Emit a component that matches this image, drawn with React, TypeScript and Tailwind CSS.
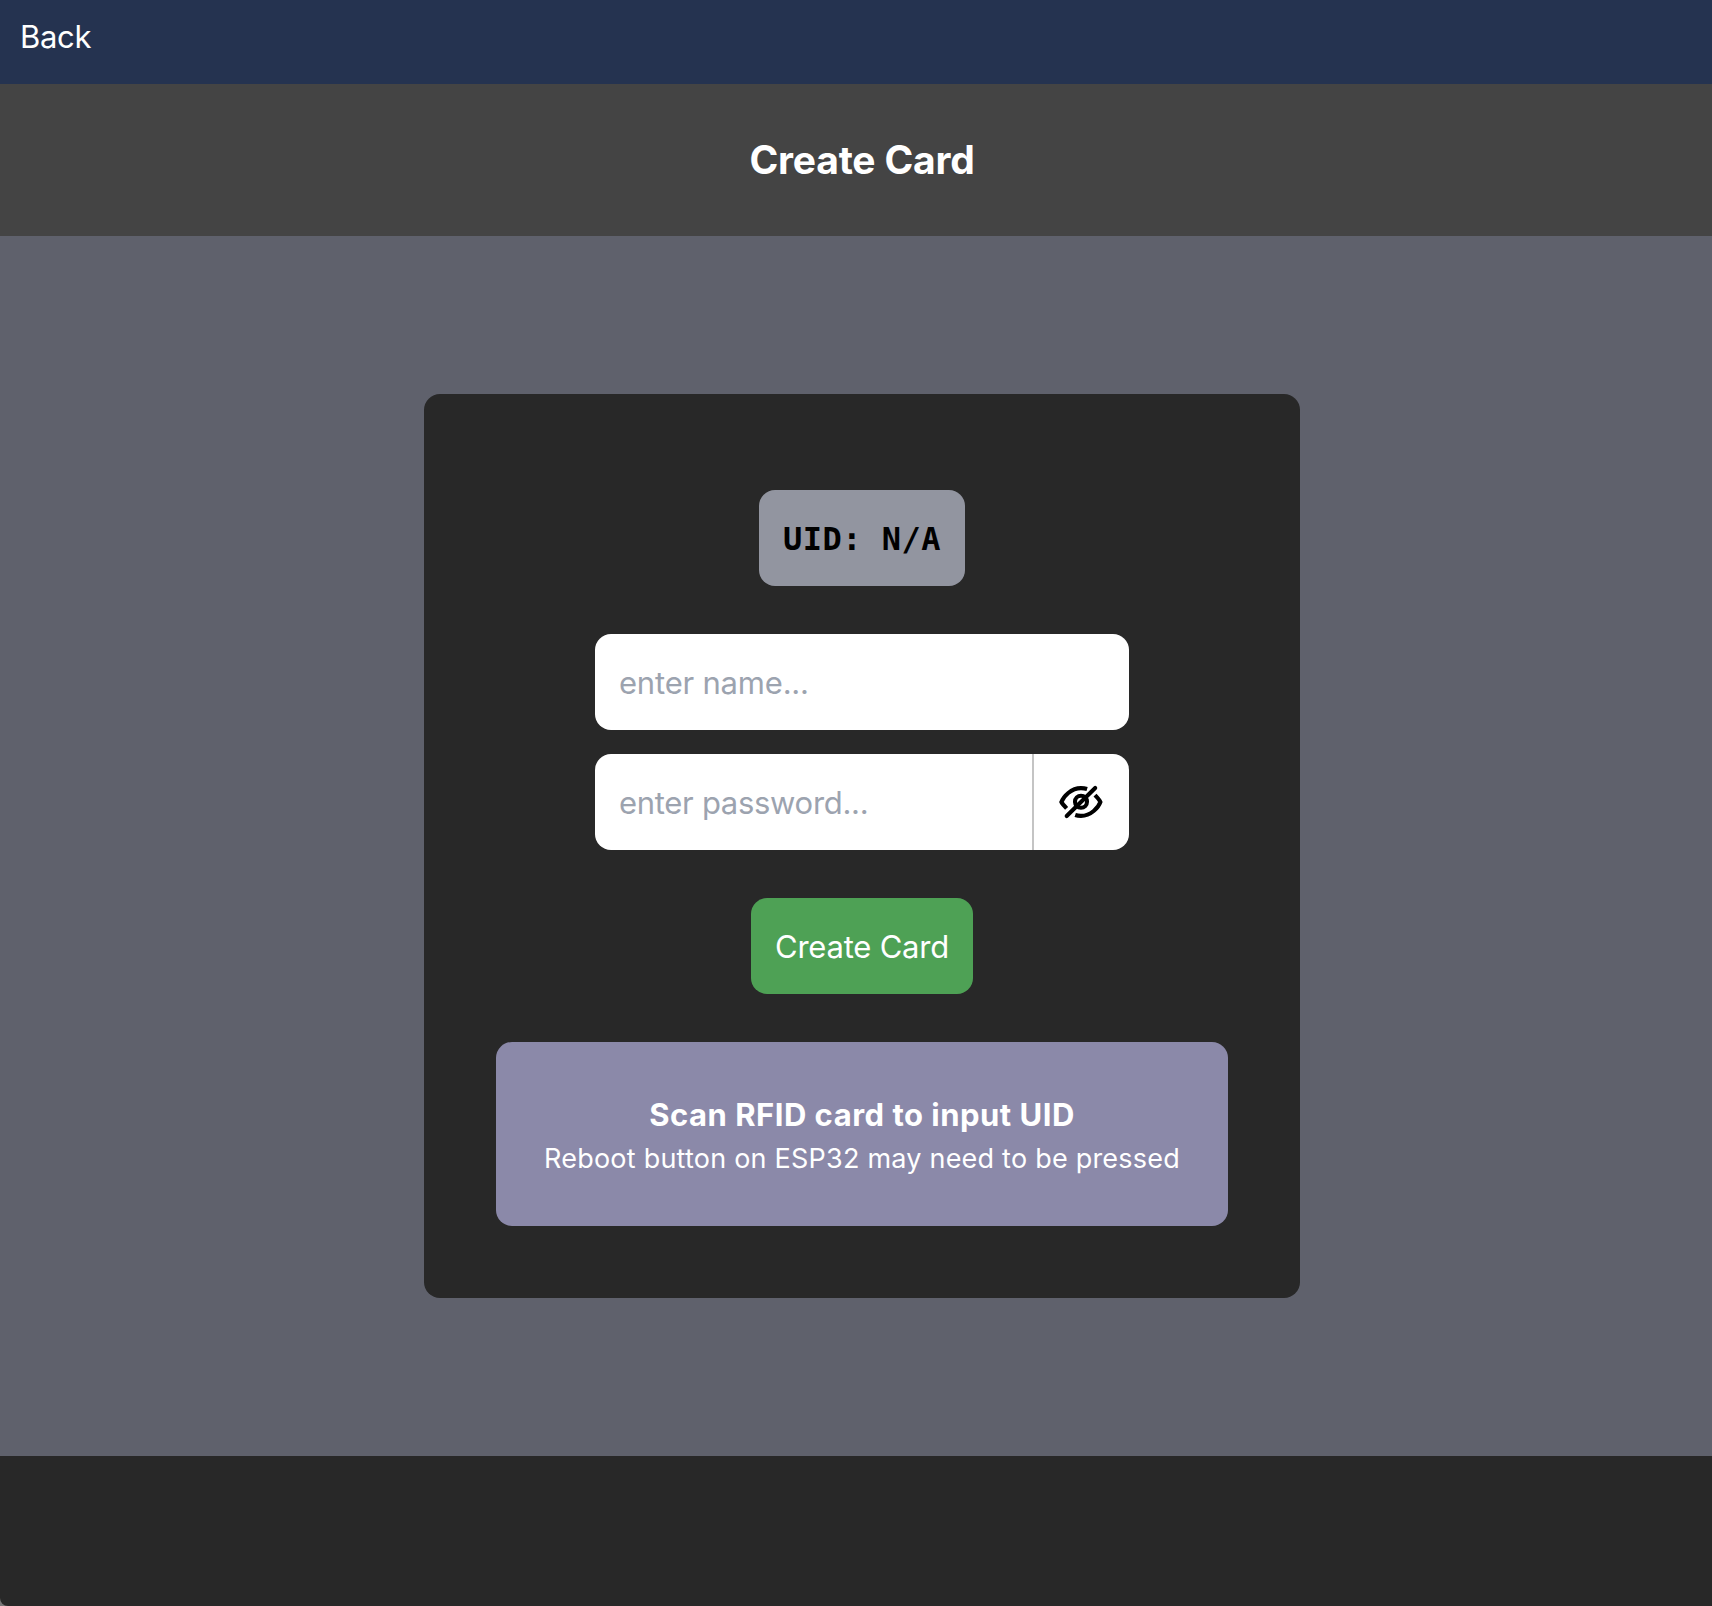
import { useState } from "react";

function EyeOff() {
  return (
    <svg className="mr-px size-12" viewBox="0 0 48 48" fill="none" stroke="currentColor" strokeWidth="4.1" aria-hidden="true">
      <circle cx="24" cy="23.8" r="6" />
      <path strokeLinecap="round" d="M9.7 38 38.2 10" />
      <path d="M9.6 30.4C7.4 28 5 25.2 4.4 24 6.5 18.5 14 10.1 24 10.1c2.2 0 4.2.3 6.1.9" />
      <path d="M38 17.2C40.3 19.6 42.8 22.6 43.4 24 41.4 29.5 34 37.9 24 37.9c-2.1 0-4.1-.3-5.8-.9" />
    </svg>
  );
}

export default function App() {
  const [name, setName] = useState("");
  const [password, setPassword] = useState("");
  const [visible, setVisible] = useState(false);

  return (
    <div className="bg-[#777777]">
      <div className="flex h-[1606px] flex-col overflow-hidden rounded-bl-[8px] bg-[#282828] font-[Inter,sans-serif] text-[31px] leading-[48px] text-white">
        <nav className="h-[84px] shrink-0 bg-[#253350] px-5 pt-[13px]">
          <a href="#" className="inline-block tracking-[-0.3px]">Back</a>
        </nav>

        <header className="flex h-[152px] shrink-0 items-center justify-center bg-[#444444] pl-3">
          <h1 className="text-[39px] leading-[56px] font-bold tracking-[-0.2px]">Create Card</h1>
        </header>

        <main className="flex h-[1220px] shrink-0 items-center justify-center bg-[#5f616c] pl-3">
          <form
            className="flex h-[904px] w-[876px] flex-col items-center gap-12 rounded-2xl bg-[#282828] px-[72px] pt-24"
            onSubmit={(e) => e.preventDefault()}
          >
            <div className="flex h-24 w-[206px] shrink-0 items-center justify-center rounded-2xl bg-[#9295a0] pt-0.5 font-['DejaVu_Sans_Mono',monospace] text-[32px] font-bold tracking-[0.48px] whitespace-pre text-black">
              UID: N/A
            </div>

            <div className="flex w-[534px] flex-col gap-6">
              <input
                className="h-24 w-full rounded-2xl bg-white px-6 tracking-[-0.2px] text-black outline-none placeholder:text-[#9ca3af]"
                placeholder="enter name..."
                value={name}
                onChange={(e) => setName(e.target.value)}
              />
              <div className="flex h-24 overflow-hidden rounded-2xl bg-white text-black">
                <input
                  className="w-[437px] px-6 pt-0.5 tracking-[-0.3px] outline-none placeholder:text-[#9ca3af]"
                  type={visible ? "text" : "password"}
                  placeholder="enter password..."
                  value={password}
                  onChange={(e) => setPassword(e.target.value)}
                />
                <button
                  type="button"
                  aria-label="Toggle password visibility"
                  className="flex flex-1 items-center justify-center border-l-2 border-[#c4c4c4]"
                  onClick={() => setVisible(!visible)}
                >
                  <EyeOff />
                </button>
              </div>
            </div>

            <button type="submit" className="h-24 w-[222px] shrink-0 rounded-2xl bg-[#4ea155] pt-0.5 tracking-[-0.22px]">
              Create Card
            </button>

            <div className="h-[184px] w-full shrink-0 rounded-2xl bg-[#8b89a9] pt-[49px] text-center whitespace-nowrap">
              <h2 className="font-bold tracking-[0.5px]">Scan RFID card to input UID</h2>
              <p className="text-[27px] leading-10 tracking-[0.22px]">Reboot button on ESP32 may need to be pressed</p>
            </div>
          </form>
        </main>
      </div>
    </div>
  );
}
